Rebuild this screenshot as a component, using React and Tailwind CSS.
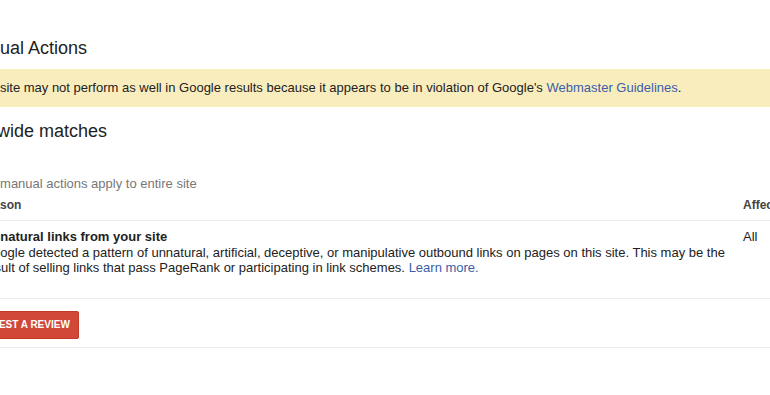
export default function App() {
  return (
    <div className="w-[770px] h-[395px] overflow-hidden bg-white text-[#222] font-['Liberation_Sans',Arial,sans-serif]">
      <div className="ml-[-35px] w-[960px] pt-[36px]">
        <h1 className="text-[18px] leading-[24px] font-normal text-[#222]">Manual Actions</h1>
        <div className="mt-[9px] h-[38px] bg-[#f9edbe] pl-[5px] flex items-center text-[13px] leading-[16px] text-[#222]">
          <span>
            Your site may not perform as well in Google results because it appears to be in violation of Google's{" "}
            <a className="text-[#3b5ea8]">Webmaster Guidelines</a>.
          </span>
        </div>
        <h2 className="mt-[12px] ml-[-5px] text-[18px] leading-[24px] font-normal text-[#222]">Site-wide matches</h2>
        <div className="mt-[33px] pl-[17px] text-[13px] leading-[16px] text-[#777]">All manual actions apply to entire site</div>
        <div className="grid grid-cols-[777px_1fr]">
          <div className="pl-[13px] pt-[6px] pb-[8px] text-[12px] leading-[14px] font-bold text-[#444] border-b border-[#ebebeb]">Reason</div>
          <div className="pl-[1px] pt-[6px] pb-[8px] text-[12px] leading-[14px] font-bold text-[#444] border-b border-[#ebebeb]">Affected</div>
          <div className="pl-[18px] pr-[8px] pt-[8px] pb-[22px] text-[13px] leading-[15.5px] border-b border-[#ebebeb]">
            <div className="font-bold">Unnatural links from your site</div>
            <div>
              Google detected a pattern of unnatural, artificial, deceptive, or manipulative outbound links on pages on this site. This may be the result of selling links that pass PageRank or participating in link schemes.{" "}
              <a className="text-[#3b5ea8]">Learn more.</a>
            </div>
          </div>
          <div className="pl-[1px] pt-[8px] pb-[22px] text-[13px] leading-[15.5px] border-b border-[#ebebeb]">All</div>
        </div>
        <div className="pt-[12px] pb-[8px] border-b border-[#ebebeb]">
          <button className="ml-[-4px] h-[28px] px-[8px] rounded-[2px] bg-[#d14836] border border-[#c53727] text-white text-[10px] font-bold uppercase">
            Request a review
          </button>
        </div>
      </div>
    </div>
  );
}
